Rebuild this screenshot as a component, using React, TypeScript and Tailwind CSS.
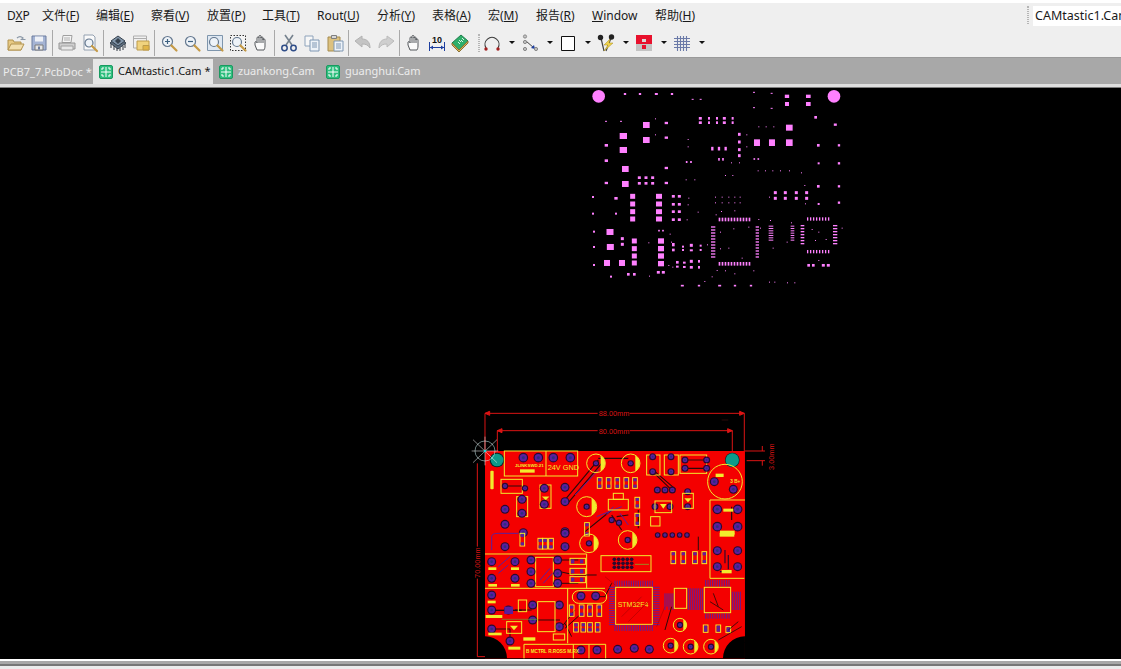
import React from 'react';

type Seg = [string, string?, string?];

const menus: { parts: Seg; w: string }[] = [
  { parts: ['D', 'X', 'P'], w: 'w-[35px]' },
  { parts: ['文件(', 'F', ')'], w: 'w-[54px]' },
  { parts: ['编辑(', 'E', ')'], w: 'w-[55px]' },
  { parts: ['察看(', 'V', ')'], w: 'w-[56px]' },
  { parts: ['放置(', 'P', ')'], w: 'w-[55px]' },
  { parts: ['工具(', 'T', ')'], w: 'w-[55px]' },
  { parts: ['Rout(', 'U', ')'], w: 'w-[60px]' },
  { parts: ['分析(', 'Y', ')'], w: 'w-[55px]' },
  { parts: ['表格(', 'A', ')'], w: 'w-[56px]' },
  { parts: ['宏(', 'M', ')'], w: 'w-[48px]' },
  { parts: ['报告(', 'R', ')'], w: 'w-[56px]' },
  { parts: ['', 'W', 'indow'], w: 'w-[63px]' },
  { parts: ['帮助(', 'H', ')'], w: 'w-[50px]' },
];

const Sep = () => (
  <div className="w-[5px] h-[26px] flex justify-center shrink-0">
    <div className="w-px h-full bg-[#a9a9a9]" />
  </div>
);

const Slot = ({ children }: { children: React.ReactNode }) => (
  <div className="w-[23px] h-[20px] flex items-center justify-center shrink-0">
    <svg width="20" height="20" viewBox="0 0 20 20" fill="none">
      {children}
    </svg>
  </div>
);

const Caret = () => (
  <div className="w-[15px] flex justify-center shrink-0 pl-[2px]">
    <div className="w-0 h-0 border-x-[3px] border-x-transparent border-t-[3px] border-t-[#111]" />
  </div>
);

const Grip = () => <div className="w-[2px] h-[18px] border-x border-dotted border-[#b5b5b5] shrink-0" />;

const Lens = ({ cx = 8.5, cy = 8.5, r = 5 }: { cx?: number; cy?: number; r?: number }) => (
  <>
    <circle cx={cx} cy={cy} r={r} fill="#eef3f8" stroke="#64788f" strokeWidth="1.2" />
    <path d={`M${cx + r - 1} ${cy + r - 1}l5 5`} stroke="#c59a46" strokeWidth="2.2" strokeLinecap="round" />
  </>
);

const icons: Record<string, React.ReactNode> = {
  open: (
    <>
      <path d="M2 17V7h5l1 2h7v8z" fill="#e7c983" stroke="#b1924e" />
      <path d="M2 17l3-6h13l-3 6z" fill="#f3dfae" stroke="#b1924e" />
      <path d="M11 5c2-2 4-2 6 0l-1.500 1.500h4" stroke="#8a97a6" strokeWidth="1.200" />
    </>
  ),
  save: (
    <>
      <path d="M3 3h14v14H3z" fill="#a5b4d4" stroke="#6d7d9f" />
      <path d="M6 3.500h8v5H6z" fill="#eef1f7" />
      <path d="M6 12h8v5H6z" fill="#e6e6e6" stroke="#7d7d7d" />
      <path d="M9 13.500h2v3H9z" fill="#6d7d9f" />
    </>
  ),
  print: (
    <>
      <path d="M6 2.500h9l-1 7H5z" fill="#f4f4f4" stroke="#a0a0a0" />
      <path d="M7 5h6M7 7h6" stroke="#b0b0b0" />
      <path d="M2 10h16v6H2z" fill="#cfcfcf" stroke="#959595" />
      <path d="M4 13h12v4H4z" fill="#e8e8e8" stroke="#a0a0a0" />
    </>
  ),
  preview: (
    <>
      <path d="M4 2h9l2 2v13H4z" fill="#fafafa" stroke="#93a0b0" />
      <Lens cx={9} cy={10} r={4} />
    </>
  ),
  chip: (
    <>
      <path d="M10 4l8 6-8 6-8-6z" fill="#5c6d7e" stroke="#37424e" />
      <path d="M10 3l7 5-7 5-7-5z" fill="#8195a9" stroke="#37424e" />
      <path d="M3 11v4M6 13v4M9 15v3M12 15v3M15 13v4M17 11v4" stroke="#2e3740" />
      <path d="M10 5l3 3-3 3-3-3z" fill="#36414d" />
    </>
  ),
  layers: (
    <>
      <path d="M2.500 3h13v12h-13z" fill="#f0f0f0" stroke="#adadad" />
      <path d="M2.500 5.500h13" stroke="#adadad" />
      <path d="M6 8h12v9H6z" fill="#f0d37e" stroke="#bd9c4b" />
      <path d="M12 12.500h6V17h-6z" fill="#e2b648" stroke="#bd9c4b" />
    </>
  ),
  zoomIn: (
    <>
      <Lens />
      <path d="M6 8.500h5M8.500 6v5" stroke="#3d6180" strokeWidth="1.200" />
    </>
  ),
  zoomOut: (
    <>
      <Lens />
      <path d="M6 8.500h5" stroke="#3d6180" strokeWidth="1.200" />
    </>
  ),
  zoomFit: (
    <>
      <path d="M2.500 2.500h15v15h-15z" fill="#dfe8f2" stroke="#7e95ac" />
      <Lens cx={9} cy={9} r={4.500} />
    </>
  ),
  zoomSel: (
    <>
      <path d="M2.500 2.500h15v15h-15z" fill="#f4f4f4" stroke="#333" strokeDasharray="1.500 1.500" />
      <Lens cx={9} cy={9} r={4.500} />
    </>
  ),
  hand: (
    <path
      d="M6 17l-2-5V9c1-1 2 0 2 1V5c0-1.500 2-1.500 2 0V3.500c0-1.500 2-1.500 2 0V5c0-1.500 2-1.500 2 0v2c0-1.500 2-1.500 2 0v6c0 2-.5 3-1 4zM8 5v5M10 4v6M12 5v5"
      fill="#fbfbfb"
      stroke="#55585c"
    />
  ),
  cut: (
    <>
      <path d="M6 2l7 10M14 2L7 12" stroke="#76828e" strokeWidth="1.600" />
      <circle cx="5.500" cy="15" r="2.700" stroke="#2f4d88" strokeWidth="1.500" />
      <circle cx="14.500" cy="15" r="2.700" stroke="#2f4d88" strokeWidth="1.500" />
    </>
  ),
  copy: (
    <>
      <path d="M3 3h8v10H3z" fill="#f7f7f7" stroke="#8ea3bb" />
      <path d="M8 7h9v11H8z" fill="#edf2f8" stroke="#7f97b3" />
      <path d="M10 10h5M10 12h5M10 14h5" stroke="#7f97b3" />
    </>
  ),
  paste: (
    <>
      <path d="M3 4h12v14H3z" fill="#dcc17f" stroke="#a58b4e" />
      <path d="M6.500 2.500h5v3h-5z" fill="#d7d7d7" stroke="#7f7f7f" />
      <path d="M9 8h9v10H9z" fill="#eef3f9" stroke="#7f97b3" />
      <path d="M11 11h5M11 13h5M11 15h5" stroke="#7f97b3" />
    </>
  ),
  undo: <path d="M2 8l7-5v3c5 0 8 3 8 9-2-3-4-4-8-4v3z" fill="#c4c4c4" stroke="#b2b2b2" />,
  redo: <path d="M18 8l-7-5v3c-5 0-8 3-8 9 2-3 4-4 8-4v3z" fill="#cfcfcf" stroke="#bbb" />,
  dim: (
    <>
      <path d="M2.500 9v9M17.500 9v9M3 14.500h14" stroke="#1d3fa0" />
      <path d="M3 14.500l3-2v4zM17 14.500l-3-2v4z" fill="#1d3fa0" />
      <text x="10" y="10" textAnchor="middle" fontSize="9" fontWeight="700" fill="#111" fontFamily="'Liberation Sans', sans-serif">
        10
      </text>
    </>
  ),
  book: (
    <>
      <path d="M2 10l9-8 7 6-9 9z" fill="#2fae6a" stroke="#1c7d4a" />
      <path d="M2 10v2l7 7 9-9V8l-9 9z" fill="#d8b45b" stroke="#8a7135" />
      <path d="M9 7l2 2M8 9l2 2M12 5l2 2M11 7l2 2" stroke="#d9f5e6" />
    </>
  ),
  arc: (
    <>
      <path d="M4 15a7 7 0 1 1 12 0" stroke="#3d3d3d" strokeWidth="1.100" />
      <circle cx="4" cy="16" r="1.700" fill="#a32020" />
      <circle cx="16" cy="16" r="1.700" fill="#a32020" />
    </>
  ),
  route: (
    <>
      <path d="M6 8l8 7" stroke="#444" />
      <path d="M15 16l-4-1 3-3z" fill="#1d3fa0" />
      <circle cx="5" cy="3.500" r="1.600" fill="#c4c4c4" stroke="#888" />
      <circle cx="5" cy="9" r="1.600" fill="#c4c4c4" stroke="#888" />
      <circle cx="5" cy="16" r="1.600" fill="#c4c4c4" stroke="#888" />
      <circle cx="16" cy="16" r="1.600" fill="#c4c4c4" stroke="#888" />
    </>
  ),
  rect: <path d="M3.500 3.500h13v14h-13z" fill="#fff" stroke="#111" />,
  pins: (
    <>
      <path d="M5 5l3 13M15 5l-5 13" stroke="#444" strokeWidth="1.200" />
      <path d="M14 6l-6 6h4l-4 6 9-8h-4z" fill="#efd34d" stroke="#a98f1c" strokeWidth=".5" />
      <circle cx="4.500" cy="4.500" r="2.700" fill="#222" />
      <circle cx="15.500" cy="4" r="2.700" fill="#222" />
    </>
  ),
  red: (
    <>
      <path d="M2 2h16v9H2z" fill="#e8112d" />
      <path d="M2 11h16v7H2z" fill="#c3c3c3" />
      <path d="M8 6h4v3H8z" fill="#d9d9d9" />
      <path d="M8 12h4v4H8z" fill="#e8112d" />
    </>
  ),
  grid: (
    <path
      d="M5.500 3v15M8.500 3v15M11.500 3v15M14.500 3v15M2 5.500h16M2 8.500h16M2 11.500h16M2 14.500h16"
      stroke="#6b7aa8"
      strokeWidth="1.100"
    />
  ),
};

const tabIcon = (
  <svg width="14" height="14" viewBox="0 0 14 14" className="shrink-0">
    <rect x=".5" y=".5" width="13" height="13" rx="1.500" fill="#2fbf7f" stroke="#1a9a60" />
    <path d="M7 2v10M2 7h10" stroke="#fff" />
    <path d="M3 5V3h2M9 3h2v2M11 9v2H9M5 11H3V9" stroke="#fff" fill="none" />
  </svg>
);

// ---- pink paste layer, values in 3x crop units ----
const pads: number[][] = [
  [120, 27, 7, 6], [165, 27, 7, 6], [214, 27, 9, 6], [261, 27, 7, 6], [323, 43, 6, 3], [347, 43, 6, 3],
  [507, 22, 6, 3], [560, 25, 6, 3], [507, 68, 6, 3], [560, 70, 6, 3], [606, 34, 13, 10], [670, 34, 14, 10],
  [606, 57, 12, 12], [670, 57, 14, 12], [692, 97, 8, 8], [751, 119, 9, 7], [63, 109, 6, 3], [108, 109, 6, 3],
  [184, 120, 20, 18], [244, 114, 10, 7], [115, 153, 22, 18], [184, 165, 20, 18], [244, 158, 10, 7],
  [115, 195, 22, 18], [64, 181, 10, 8], [64, 227, 10, 8], [121, 252, 20, 18], [121, 297, 20, 18],
  [244, 249, 10, 7], [244, 294, 10, 7], [64, 294, 10, 7], [163, 278, 9, 8], [183, 278, 9, 8], [203, 278, 9, 8],
  [163, 295, 9, 8], [183, 295, 9, 8], [203, 295, 9, 8], [143, 334, 15, 15], [143, 357, 15, 15], [143, 380, 15, 15],
  [143, 402, 15, 15], [222, 334, 18, 15], [222, 357, 18, 15], [222, 380, 18, 15], [222, 402, 18, 15],
  [93, 340, 10, 8], [24, 336, 6, 6], [24, 386, 6, 6], [93, 386, 6, 6], [265, 334, 9, 8], [283, 334, 9, 8],
  [265, 358, 9, 8], [283, 358, 9, 8], [265, 380, 9, 8], [283, 380, 9, 8], [265, 404, 9, 8], [283, 404, 9, 8],
  [346, 100, 9, 8], [372, 100, 6, 8], [396, 100, 6, 8], [418, 100, 9, 8], [443, 100, 6, 8], [346, 113, 9, 8],
  [372, 113, 6, 8], [396, 113, 6, 8], [418, 113, 9, 8], [443, 113, 6, 8], [463, 148, 8, 9], [463, 171, 8, 9],
  [463, 194, 8, 9], [463, 212, 8, 9], [382, 191, 7, 11], [402, 191, 7, 11], [422, 191, 7, 11], [402, 223, 5, 8],
  [414, 223, 5, 8], [516, 173, 18, 20], [561, 173, 18, 20], [613, 173, 20, 20], [613, 128, 20, 18], [508, 222, 5, 5],
  [520, 222, 5, 5], [305, 231, 5, 6], [318, 231, 5, 6], [700, 181, 8, 8], [762, 181, 7, 7], [701, 235, 6, 6],
  [762, 235, 7, 7], [700, 304, 8, 8], [762, 304, 7, 7], [701, 357, 6, 6], [762, 353, 7, 7], [571, 323, 9, 9],
  [601, 323, 9, 9], [634, 323, 9, 9], [665, 323, 9, 9], [571, 340, 9, 9], [601, 340, 9, 9], [634, 340, 9, 9],
  [665, 340, 9, 9], [75, 441, 21, 18], [76, 486, 21, 18], [66, 534, 18, 18], [111, 534, 18, 18], [148, 534, 15, 15],
  [148, 468, 15, 15], [148, 491, 15, 15], [148, 513, 15, 15], [228, 468, 18, 16], [228, 491, 18, 16], [228, 513, 18, 16],
  [228, 536, 18, 16], [112, 461, 9, 9], [112, 478, 9, 9], [222, 437, 5, 5], [234, 437, 5, 5], [27, 440, 6, 6],
  [27, 486, 6, 6], [27, 540, 6, 6], [130, 568, 8, 8], [148, 568, 8, 8], [220, 562, 9, 8], [235, 562, 9, 8],
  [78, 575, 6, 6], [265, 479, 8, 10], [265, 495, 8, 8], [294, 485, 6, 6], [294, 495, 6, 6], [319, 481, 9, 9],
  [319, 496, 9, 6], [347, 482, 6, 6], [347, 495, 6, 6], [277, 532, 8, 8], [277, 545, 8, 6], [298, 533, 8, 6],
  [298, 546, 8, 6], [319, 529, 9, 9], [319, 547, 9, 8], [342, 529, 6, 8], [342, 547, 6, 8], [292, 602, 9, 5],
  [342, 602, 7, 5], [404, 602, 9, 5], [450, 602, 7, 5], [498, 602, 7, 5], [671, 541, 8, 8], [685, 541, 8, 8],
  [715, 541, 9, 8], [730, 541, 9, 8],
];

const range = (from: number, to: number, step: number) => {
  const out: number[] = [];
  for (let v = from; v <= to; v += step) out.push(v);
  return out;
};

const dots: number[][] = [
  [210, 100], [210, 148], [308, 162], [308, 184], [438, 232], [462, 232], [484, 148], [484, 184], [520, 124],
  [542, 124], [565, 124], [518, 256], [540, 256], [562, 256], [585, 256], [612, 256], [648, 262], [420, 270],
  [442, 270], [302, 283], [328, 283], [310, 338], [308, 358], [305, 403], [338, 380], [390, 335], [410, 335],
  [430, 335], [448, 335], [464, 335], [390, 352], [410, 352], [430, 352], [448, 352], [464, 352], [408, 378],
  [448, 376], [392, 388], [520, 402], [555, 405], [618, 412], [658, 300], [660, 355], [552, 335], [190, 472],
  [254, 446], [258, 470], [366, 478], [250, 540], [262, 545], [192, 572], [358, 588], [380, 574], [448, 565],
  [552, 590], [568, 590], [606, 592], [628, 592], [700, 525], [770, 428], [445, 430], [405, 440], [490, 425],
  [430, 488], [470, 518], [505, 556], [420, 556], [395, 555], [700, 440], [680, 432], [722, 462], [690, 465],
  [605, 470], [563, 488], [525, 428], [405, 490],
];

const PasteLayer = () => (
  <g transform="translate(585 85) scale(0.3333)" fill="#ff80ff">
    <circle cx="41" cy="34" r="19" />
    <circle cx="747" cy="34" r="19" />
    {pads.map(([x, y, w, h], i) => (
      <rect key={i} x={x - w / 2} y={y - h / 2} width={w} height={h} />
    ))}
    {range(403, 500, 9).map((x) => (
      <React.Fragment key={x}>
        <rect x={x - 2} y={398} width={5} height={11} />
        <rect x={x - 2} y={531} width={5} height={11} />
      </React.Fragment>
    ))}
    {range(424, 522, 9).map((y) => (
      <React.Fragment key={y}>
        <rect x={378} y={y} width={13} height={4} />
        <rect x={512} y={y} width={10} height={4} />
      </React.Fragment>
    ))}
    {range(668, 733, 9).map((x) => (
      <React.Fragment key={x}>
        <rect x={x - 2} y={397} width={4} height={10} />
        <rect x={x - 2} y={495} width={4} height={10} />
      </React.Fragment>
    ))}
    {range(420, 482, 9).map((y) => (
      <React.Fragment key={y}>
        <rect x={647} y={y} width={11} height={4} />
        <rect x={744} y={y} width={13} height={4} />
      </React.Fragment>
    ))}
    {range(422, 470, 7).map((y) => (
      <React.Fragment key={y}>
        <rect x={551} y={y} width={14} height={3} />
        <rect x={617} y={y} width={11} height={3} />
      </React.Fragment>
    ))}
    {dots.map(([x, y], i) => (
      <rect key={i} x={x} y={y} width={3} height={3} />
    ))}
  </g>
);

// ---- board, also in 3x crop units ----
const Y = '#f2ec2c';
const P = '#5a1f9e';
const Via = ({ x, y, r = 10 }: { x: number; y: number; r?: number }) => (
  <g>
    <circle cx={x} cy={y} r={r + 3.500} fill="#2a0a2e" />
    <circle cx={x} cy={y} r={r} fill={P} />
    <circle cx={x} cy={y} r={r * 0.4} fill="#2b2f7f" />
  </g>
);
const Box = ({ a }: { a: number[] }) => (
  <rect x={a[0]} y={a[1]} width={a[2] - a[0]} height={a[3] - a[1]} fill="none" stroke={Y} strokeWidth="3" />
);
const Smd = ({ x, y, h = 30 }: { x: number; y: number; h?: number }) => (
  <g>
    <rect x={x - 7} y={y} width={14} height={h} fill="none" stroke={Y} strokeWidth="3" />
    <rect x={x - 5} y={y + 2} width={10} height={9} fill={P} />
    <rect x={x - 5} y={y + h - 11} width={10} height={9} fill={P} />
  </g>
);
const Ring = ({ x, y, r, via = true }: { x: number; y: number; r: number; via?: boolean }) => (
  <g>
    <circle cx={x} cy={y} r={r} fill="none" stroke={Y} strokeWidth="3" />
    <path d={`M${x + r * 0.5} ${y - r * 0.85}A${r} ${r} 0 0 1 ${x + r * 0.5} ${y + r * 0.85}z`} fill={Y} />
    {via && <Via x={x} y={y} r={6} />}
  </g>
);

const Pcb = () => (
  <g>
    {/* upper half: crop origin 465,400 */}
    <g transform="translate(465 400) scale(0.3333)">
      <path d="M60 153H840V775H60z" fill="#f40000" />
      <path d="M60 709A66 66 0 0 1 126 775H60zM840 709A66 66 0 0 0 774 775H840z" fill="#000" />
      {/* dimensions */}
      <g stroke="#dc1414" strokeWidth="3" fill="none">
        <path d="M60 40H838M60 40V153M838 40V153M97 92H802M97 92V165M802 92V160" />
        <path d="M840 153H900M845 182H900M892 138V153M892 182V197M37 190V770M37 770H60" />
        <path d="M60 40l14-6v12zM838 40l-14-6v12zM97 92l14-6v12zM802 92l-14-6v12z" fill="#dc1414" />
      </g>
      <g fontFamily="'Liberation Sans', sans-serif" fontSize="22" fill="#dc1414" textAnchor="middle">
        <rect x="398" y="30" width="96" height="22" fill="#000" />
        <text x="447" y="49">88.00mm</text>
        <rect x="398" y="82" width="96" height="22" fill="#000" />
        <text x="447" y="101">80.00mm</text>
        <text transform="translate(927 170) rotate(-90)">3.00mm</text>
        <rect x="25" y="440" width="24" height="96" fill="#000" />
        <text transform="translate(46 488) rotate(-90)">70.00mm</text>
      </g>
      {/* corner drill marks */}
      <circle cx="96" cy="180" r="22" fill="#062a2a" />
      <circle cx="96" cy="180" r="19" fill="#0d9a8a" />
      <circle cx="802" cy="180" r="22" fill="#062a2a" />
      <circle cx="802" cy="180" r="20" fill="#0d9a8a" />
      <g stroke="#fff" strokeWidth="1.500" fill="none">
        <circle cx="60" cy="153" r="30" stroke="#d8ffff" />
        <path d="M24 119L96 188M96 119L24 188M60 110V196M20 153H100" />
      </g>
      <circle cx="60" cy="153" r="4" fill="#22d8d8" />
      {/* traces */}
      <g stroke="#2a0a0a" strokeWidth="3.500" fill="none">
        <path d="M400 180L300 300M410 190L308 310M563 215L625 275M570 215L632 268M660 180H725M660 205H725M400 175H490" />
        <path d="M770 60H790M800 320V360M360 395L440 330M455 350L490 345M120 258H180M440 345L470 390M520 330V385" />
      </g>
      <path d="M330 285L400 210M395 350L470 320M425 345L445 320M465 340L490 375" stroke={P} strokeWidth="3" />
      <Box a={[118, 153, 338, 228]} />
      <path d="M243 153V228M840 300H735V535H838" stroke={Y} strokeWidth="3" fill="none" />
      {[[175, 173], [220, 173], [265, 173], [316, 173]].map(([x, y]) => <Via key={x} x={x} y={y} r={11} />)}
      <text x="248" y="209" fontSize="22" fill={Y} fontFamily="'Liberation Sans', sans-serif">24V GND</text>
      <text x="150" y="202" fontSize="13" fill={Y} fontWeight="700" fontFamily="'Liberation Sans', sans-serif">JLINKSWD.21</text>
      <rect x="165" y="208" width="44" height="10" fill={Y} />
      <rect x="76" y="212" width="10" height="56" fill={Y} rx="3" />
      <Box a={[108, 238, 172, 280]} />
      <Via x={120} y={258} r={6} />
      <Via x={180} y={265} r={6} />
      <Ring x={393} y={190} r={28} />
      <Ring x={497} y={190} r={28} />
      <Box a={[225, 255, 258, 325]} />
      <Box a={[155, 290, 188, 350]} />
      <path d="M232 290h20l-10 10zM232 300h20" fill={Y} stroke={Y} />
      {[[300, 262], [300, 305], [238, 265], [238, 313], [171, 298], [171, 340], [120, 328], [120, 373], [300, 395], [175, 398]].map(([x, y], i) => (
        <Via key={i} x={x} y={y} r={10} />
      ))}
      <Ring x={365} y={320} r={30} />
      {[397, 424, 450, 477, 503].map((x) => <Smd key={x} x={x + 7} y={233} h={32} />)}
      <Box a={[430, 298, 490, 330]} />
      <Box a={[445, 280, 475, 298]} />
      <Smd x={517} y={292} h={32} />
      <Smd x={517} y={340} h={36} />
      <Smd x={366} y={368} h={40} />
      <Via x={440} y={360} r={6} />
      <Via x={462} y={368} r={6} />
      <Box a={[557, 350, 585, 378]} />
      <Box a={[545, 165, 585, 225]} />
      <Box a={[598, 165, 640, 225]} />
      <Box a={[645, 165, 725, 220]} />
      {[[563, 170], [563, 215], [618, 170], [618, 215], [660, 180], [660, 205], [725, 180], [725, 205], [577, 270], [600, 270], [622, 270], [570, 320], [615, 320], [668, 275], [668, 320]].map(([x, y], i) => (
        <Via key={i} x={x} y={y} r={7} />
      ))}
      <Box a={[570, 303, 620, 338]} />
      <Box a={[653, 280, 685, 325]} />
      <path d="M585 312h20l-10 14zM658 295h22l-11 12z" fill={Y} />
      <circle cx="780" cy="245" r="52" fill="none" stroke={Y} strokeWidth="3" />
      <Via x={748} y={245} r={10} />
      <Via x={805} y={268} r={10} />
      <rect x="752" y="221" width="24" height="10" fill={Y} />
      <text x="796" y="248" fontSize="14" fontWeight="700" fill={Y} fontFamily="'Liberation Sans', sans-serif">3 B+</text>
      {[[757, 328], [818, 328], [757, 380], [818, 380]].map(([x, y]) => <Via key={`${x}${y}`} x={x} y={y} r={11} />)}
      <rect x="775" y="326" width="30" height="9" fill={Y} />
      <rect x="765" y="392" width="44" height="12" fill={Y} />
    </g>
    {/* lower half: crop origin 465,530 */}
    <g transform="translate(465 530) scale(0.3333)">
      <path d="M60 72H365V175M60 175H420" stroke={Y} strokeWidth="3" fill="none" />
      <Box a={[212, 82, 265, 170]} />
      <Box a={[408, 77, 558, 125]} />
      {range(448, 500, 13).flatMap((x) => [88, 100, 112].map((y) => (
        <circle key={`${x}${y}`} cx={x} cy={y} r="5.500" fill="#2a0a2e" />
      )))}
      <path d="M510 103H552" stroke="#9a8a20" strokeWidth="3" />
      <path d="M225 150L255 115M235 160L262 130M80 60V20Q80 10 100 10H160M100 110L135 80M100 130L130 105" stroke={P} strokeWidth="3" fill="none" />
      <g stroke="#2a0a0a" strokeWidth="3" fill="none">
        <path d="M285 125L330 135H395M290 90H340M285 160H340M295 285L330 240M300 295L350 250M300 280L320 320" />
        <path d="M150 240H200M203 270H285M90 297H135V330M395 200H420L440 160M620 230L600 300M700 60V20" />
      </g>
      {[[80, 95], [150, 95], [80, 145], [150, 145], [198, 90], [198, 125], [198, 160], [278, 90], [278, 130], [278, 160], [120, 50], [300, 50], [300, 10], [80, 195], [80, 240], [130, 240], [80, 297], [135, 333], [203, 225], [203, 270], [283, 225], [283, 290], [348, 198], [392, 198], [458, 358], [508, 355], [553, 358], [348, 360], [396, 360], [757, 62], [818, 62], [757, 110], [818, 110]].map(([x, y], i) => (
        <Via key={i} x={x} y={y} r={10} />
      ))}
      {[[310, 85], [310, 115], [310, 140]].map(([x, y]) => (
        <React.Fragment key={y}>
          <Box a={[x + 5, y, x + 52, y + 18]} />
          <rect x={x + 8} y={y + 3} width={10} height={12} fill={P} />
          <rect x={x + 35} y={y + 3} width={10} height={12} fill={P} />
        </React.Fragment>
      ))}
      <rect x="70" y="112" width="24" height="8" fill={Y} />
      <rect x="70" y="162" width="26" height="8" fill={Y} />
      <rect x="138" y="112" width="24" height="8" fill={Y} />
      <rect x="138" y="162" width="26" height="8" fill={Y} />
      <rect x="68" y="212" width="24" height="8" fill={Y} />
      <rect x="62" y="255" width="50" height="9" fill={Y} />
      <rect x="70" y="308" width="40" height="8" fill={Y} />
      <path d="M90 241H170" stroke="#2a0a0a" strokeWidth="4" />
      <rect x="118" y="230" width="26" height="22" fill={P} />
      <Box a={[160, 210, 185, 245]} />
      <Box a={[125, 275, 170, 310]} />
      <path d="M135 287h24l-12 14z" fill={Y} />
      <Box a={[218, 215, 270, 305]} />
      <path d="M110 268H218" stroke="#5fa030" strokeWidth="2" />
      <path d="M308 175V340" stroke={Y} strokeWidth="3" />
      <rect x="322" y="182" width="103" height="38" rx="19" fill="none" stroke={Y} strokeWidth="3" />
      {/* pin fans around the main chip */}
      <g stroke={P} strokeWidth="3">
        {range(450, 562, 7).map((x) => <path key={x} d={`M${x} 152V170M${x} 285V303`} />)}
        {range(172, 284, 7).map((y) => <path key={y} d={`M432 ${y}H450M564 ${y}H584`} />)}
      </g>
      <Box a={[452, 172, 562, 283]} />
      <text x="458" y="230" fontSize="21" fill={Y} fontFamily="'Liberation Sans', sans-serif">STM32F4</text>
      <path d="M470 260L530 200M490 275L550 215M420 140L450 165M575 290L600 230" stroke="#b00000" strokeWidth="2" />
      {/* USB area */}
      <g stroke={P} strokeWidth="3">
        {range(600, 625, 6).map((x) => <path key={x} d={`M${x} 190V${240 - (x % 4) * 5}`} />)}
        {range(670, 714, 6).map((x) => <path key={x} d={`M${x} 175V240`} />)}
        {range(722, 795, 7).map((x) => <path key={x} d={`M${x} 150V170M${x} 250V266`} />)}
        {range(802, 828, 6).map((x) => <path key={x} d={`M${x} 185V240`} />)}
      </g>
      <Box a={[628, 175, 665, 235]} />
      <Box a={[718, 172, 797, 248]} />
      <path d="M745 190L760 230M735 215L775 240" stroke="#2a0a0a" strokeWidth="2.500" />
      <path d="M790 75V118M780 60V100M765 125h30" stroke="#2a0a2e" strokeWidth="3.500" />
      <rect x="770" y="120" width="30" height="10" fill={Y} />
      <rect x="764" y="8" width="44" height="12" fill={Y} />
      <Ring x={372} y={40} r={28} />
      <Ring x={488} y={30} r={28} />
      <Ring x={645} y={285} r={20} />
      <Ring x={617} y={347} r={22} />
      <Ring x={677} y={350} r={22} />
      <Ring x={738} y={350} r={22} />
      {[[172, 10, 38], [226, 25, 32], [240, 25, 32], [258, 25, 32], [320, 225, 34], [350, 225, 34], [375, 225, 34], [403, 225, 34], [333, 278, 28], [355, 278, 28], [375, 278, 28], [398, 278, 28], [625, 65, 36], [655, 65, 36], [690, 65, 36], [718, 65, 36], [722, 285, 22], [760, 285, 22], [790, 290, 18]].map(([x, y, h], i) => (
        <Smd key={i} x={x} y={y} h={h} />
      ))}
      {range(578, 670, 22).map((x) => <Via key={x} x={x} y={15} r={5} />)}
      <path d="M177 385V343H422V385M325 343V385M372 343V385" stroke={Y} strokeWidth="3" fill="none" />
      <text x="183" y="368" fontSize="14" fontWeight="700" fill={Y} fontFamily="'Liberation Sans', sans-serif">B MCTRL R.ROSS M.RX</text>
      <rect x="265" y="312" width="34" height="18" fill="none" stroke={Y} strokeWidth="3" />
      <rect x="175" y="322" width="36" height="10" fill={Y} />
      <rect x="130" y="350" width="36" height="9" fill={Y} />
      <path d="M790 300L820 275M760 330L830 290" stroke="#2a0a0a" strokeWidth="2.500" />
    </g>
  </g>
);

export default function App() {
  return (
    <div className="h-[669px] w-[1121px] flex flex-col overflow-hidden bg-[#efefef] text-xs text-[#1a1a1a] font-['Noto_Sans','Noto_Sans_CJK_SC',sans-serif]">
      <div className="h-[3px] bg-white shrink-0" />
      {/* menu */}
      <div className="h-[25px] flex items-center justify-between pl-[7px] shrink-0">
        <div className="flex text-[12px] leading-none whitespace-nowrap">
          {menus.map((m, i) => (
            <div key={i} className={m.w}>
              {m.parts[0]}
              <span className="underline">{m.parts[1]}</span>
              {m.parts[2]}
            </div>
          ))}
        </div>
        <div className="flex items-stretch h-[20px] w-[94px] overflow-hidden">
          <Grip />
          <div className="ml-[4px] bg-white flex-1 pl-[2px] text-[12.500px] leading-[20px] whitespace-nowrap">CAMtastic1.Cam</div>
        </div>
      </div>
      {/* toolbar */}
      <div className="h-[29px] flex items-center pl-[4px] shrink-0">
        <Slot>{icons.open}</Slot>
        <Slot>{icons.save}</Slot>
        <Sep />
        <Slot>{icons.print}</Slot>
        <Slot>{icons.preview}</Slot>
        <Sep />
        <Slot>{icons.chip}</Slot>
        <Slot>{icons.layers}</Slot>
        <Sep />
        <Slot>{icons.zoomIn}</Slot>
        <Slot>{icons.zoomOut}</Slot>
        <Slot>{icons.zoomFit}</Slot>
        <Slot>{icons.zoomSel}</Slot>
        <Slot>{icons.hand}</Slot>
        <Sep />
        <Slot>{icons.cut}</Slot>
        <Slot>{icons.copy}</Slot>
        <Slot>{icons.paste}</Slot>
        <Sep />
        <Slot>{icons.undo}</Slot>
        <Slot>{icons.redo}</Slot>
        <Sep />
        <Slot>{icons.hand}</Slot>
        <Slot>{icons.dim}</Slot>
        <Slot>{icons.book}</Slot>
        <div className="w-[7px] shrink-0" />
        <Grip />
        <Slot>{icons.arc}</Slot>
        <Caret />
        <Slot>{icons.route}</Slot>
        <Caret />
        <Slot>{icons.rect}</Slot>
        <Caret />
        <Slot>{icons.pins}</Slot>
        <Caret />
        <Slot>{icons.red}</Slot>
        <Caret />
        <Slot>{icons.grid}</Slot>
        <Caret />
      </div>
      {/* document tabs */}
      <div className="h-[27px] bg-[#a8a8a8] flex items-end text-[#ececec] text-[11px] shrink-0 border-t border-[#9a9a9a]">
        <div className="w-[93px] h-[25px] pl-[3px] leading-[25px] whitespace-nowrap">PCB7_7.PcbDoc *</div>
        <div className="w-[120px] h-[25px] bg-[#e6e6e6] text-[#1a1a1a] flex items-center gap-[5px] pl-[6px] whitespace-nowrap">
          {tabIcon}
          <span>CAMtastic1.Cam *</span>
        </div>
        <div className="w-[113px] h-[25px] flex items-center gap-[5px] pl-[6px] whitespace-nowrap">
          {tabIcon}
          <span>zuankong.Cam</span>
        </div>
        <div className="h-[25px] flex items-center gap-[5px] whitespace-nowrap">
          {tabIcon}
          <span>guanghui.Cam</span>
        </div>
      </div>
      <div className="h-[3px] bg-[#dedede] shrink-0" />
      <div className="h-px bg-[#7d7d7d] shrink-0" />
      {/* cam canvas */}
      <div className="flex-1 bg-black min-h-0">
        <svg className="block w-full h-full" viewBox="0 88 1121 571" preserveAspectRatio="none">
          <PasteLayer />
          <Pcb />
        </svg>
      </div>
      <div className="h-[2px] bg-white shrink-0" />
      <div className="h-[3px] bg-[#a8a8a8] shrink-0" />
      <div className="h-[2px] bg-[#777] shrink-0" />
      <div className="h-[3px] bg-[#ececec] shrink-0" />
    </div>
  );
}
